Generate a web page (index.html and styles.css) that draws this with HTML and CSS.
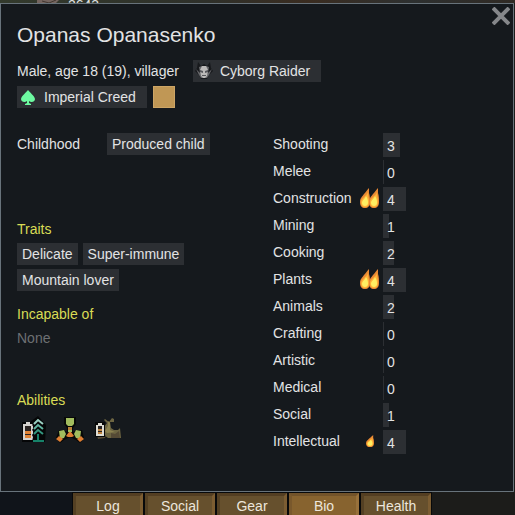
FILE: index.html
```html
<!DOCTYPE html>
<html lang="en">
<head>
    <meta charset="UTF-8">
    <meta name="viewport" content="width=device-width, initial-scale=1.0">
    <title>Opanas Opanasenko</title>
    <link rel="stylesheet" href="styles.css">
</head>
<body>
    <!-- shared flame shape for skill passions -->
    <svg class="defs" aria-hidden="true">
        <symbol id="flame" viewBox="0 0 10 20" preserveAspectRatio="none">
            <path fill="#ea8a34" d="M9 0 L9 5 C10 8 10 11 10 14 C10 18 8 20 5 20 C2 20 0 18 0 14 C0 10 2 9 4 6 C6 4 7 2 9 0Z"/>
            <path fill="#ffb238" d="M8 4 C8 8 9 10 9 14 C9 17 8 19 5 19 C2 19 1 17 1 14 C1 10 7 8 8 4Z"/>
            <path fill="#ffee62" d="M6 8 C8 11 8 13 8 15 C8 19 2 19 2 15 C2 12 5 11 6 8Z"/>
        </symbol>
    </svg>

    <div class="world">
        <svg class="item" viewBox="0 0 22 3" width="22" height="3" aria-hidden="true"><path fill="#75655f" d="M0 0h22l-3 3H0z"/><path stroke="#40362f" d="M5 1l7 2 7-3" fill="none"/></svg>
        <span class="count">2643</span>
    </div>

    <main class="window">
        <button class="close" type="button" aria-label="Close">
            <svg viewBox="0 0 18 18" width="18" height="18" aria-hidden="true"><path d="M1 1L17 17M17 1L1 17" stroke="#85878a" stroke-width="4"/></svg>
        </button>

        <h1>Opanas Opanasenko</h1>
        <div class="info">
            <div class="info-row">
                <span class="summary">Male, age 18 (19), villager</span>
                <span class="chip with-icon">
                    <svg viewBox="0 0 18 18" width="18" height="18" aria-hidden="true">
                        <path fill="#17191c" d="M3 0L6 4L9 2L12 4L15 0L16 6L18 9L14 13L12 17H6L4 13L0 9L2 6Z"/>
                        <path fill="#66676a" d="M1 7L5 11L4 5L7 4H11L14 5L13 11L17 7L14 13L12 16H6L4 13Z"/>
                        <path fill="#bbb9b8" d="M7 4H11L13 8L12 14L10 16H8L6 14L5 8Z"/>
                        <path fill="#55565a" d="M5 8L8 9V11L5 10ZM13 8L10 9V11L13 10ZM7 13H11V14H7Z"/>
                    </svg>
                    Cyborg Raider
                </span>
            </div>
            <div class="info-row tight">
                <span class="chip with-icon">
                    <svg viewBox="0 0 18 18" width="18" height="18" aria-hidden="true">
                        <path fill="#6dfaa1" d="M9 2C11 5 15 7 16 11C16 14 12 15 10 13L10 15L12 16V17H6V16L8 15L8 13C6 15 2 14 2 11C3 7 7 5 9 2Z"/>
                    </svg>
                    Imperial Creed
                </span>
                <span class="favorite-color" title="Favorite color"></span>
            </div>
        </div>

        <div class="columns">
            <div class="left">
                <div class="backstory">
                    <span>Childhood</span>
                    <span class="chip">Produced child</span>
                </div>

                <section class="traits">
                    <h2>Traits</h2>
                    <div class="chips">
                        <span class="chip">Delicate</span>
                        <span class="chip">Super-immune</span>
                        <span class="chip">Mountain lover</span>
                    </div>
                </section>

                <section class="incapable">
                    <h2>Incapable of</h2>
                    <p class="none">None</p>
                </section>

                <section class="abilities">
                    <h2>Abilities</h2>
                    <div class="ability-list">
                        <button type="button" aria-label="Tree growth">
                            <svg viewBox="0 0 32 32" width="32" height="32" aria-hidden="true">
                                <path fill="#050607" d="M5 7h8l8-6 8 9-1 17H5z"/>
                                <path fill="#d4d2ce" d="M9 7h4v2h3v16H6V9h3z"/>
                                <path fill="#292321" d="M8 11h6v12H8z"/>
                                <path fill="#e08336" d="M8 16h6v3H8zM8 20h6v3H8z"/>
                                <path fill="#050607" d="M21 2l7 8-2 2 2 3-2 2 2 3-2 2 1 5H15l1-5-1-2 2-3-2-2 2-3-2-2z"/>
                                <g fill="none" stroke-width="2">
                                    <path stroke="#9ad0c2" d="M17 9l4-4 5 4"/>
                                    <path stroke="#61b4a0" d="M17 14l4-4 5 4"/>
                                    <path stroke="#34967f" d="M17 19l4-4 5 4"/>
                                    <path stroke="#168269" d="M21 19v6M16 26h11"/>
                                </g>
                            </svg>
                        </button>
                        <button type="button" aria-label="Toxic spray">
                            <svg viewBox="0 0 32 32" width="32" height="32" aria-hidden="true">
                                <path fill="#070807" d="M10 2h12v7l-3 4v4l5-2h4l2 8-4 5-4-3-6-3-6 3-4 3-4-5 3-8h4l4 2v-4l-3-4z"/>
                                <path fill="#a2bc5e" d="M12 3h8v6l-2 2h-4l-2-2zM5 16l5-1 2 4-2 4-4 1zM27 16l-5-1-2 4 2 4 4 1z"/>
                                <path fill="#bb8238" d="M14 12h4v3h-4z"/>
                                <path fill="#a2bc5e" d="M14 15h4v2h-4z"/>
                                <path fill="#df7e32" d="M15 17h2l3 4-2 1h-4l-2-1zM5 21l4 3-3 3-4-3zM27 21l-4 3 3 3 4-3z"/>
                            </svg>
                        </button>
                        <button type="button" aria-label="Wood shaping">
                            <svg viewBox="0 0 32 32" width="32" height="32" aria-hidden="true">
                                <path fill="#6d6542" d="M14 4l4 3 3-4 2 1v3h-4l1 6 3 2h4l2-2 1 10H17l-4-3H7l6-8 3-4-3-3z"/>
                                <path fill="#8b8250" d="M17 6l2 2v7l5 2-8 1-2-2 3-5z"/>
                                <path fill="#554a35" d="M20 18l4 1 4-3 1 7H20zM6 20h9l-1 3-7 1z"/>
                                <path fill="#090a0a" d="M4 7h10v15H4z"/>
                                <path fill="#deddd5" d="M7 8h4v2h2v11H5V10h2z"/>
                                <path fill="#292321" d="M7 11h4v8H7z"/>
                                <path fill="#bd8341" d="M7 14h4v2H7zM7 17h4v2H7z"/>
                            </svg>
                        </button>
                    </div>
                </section>
            </div>

            <ul class="skills"></ul>
        </div>
    </main>

    <nav class="tabs">
        <button type="button">Log</button>
        <button type="button">Social</button>
        <button type="button">Gear</button>
        <button type="button" class="active">Bio</button>
        <button type="button">Health</button>
    </nav>

    <script src="script.js"></script>
</body>
</html>
```
FILE: styles.css
```css
* {
    box-sizing: border-box;
}

body {
    margin: 0;
    height: 100vh;
    display: flex;
    flex-direction: column;
    overflow: hidden;
    background: linear-gradient(to right, #10141a 14%, #1c1c1a 84%);
    color: #e2e3e4;
    font-family: "Liberation Sans", Arial, sans-serif;
    font-size: 14px;
    line-height: 22px;
}

h1, h2, p, ul {
    margin: 0;
    padding: 0;
    font-weight: normal;
}

button {
    margin: 0;
    padding: 0;
    border: none;
    background: none;
    color: inherit;
    font: inherit;
    cursor: pointer;
}

svg {
    display: block;
}

.defs {
    position: absolute;
    width: 0;
    height: 0;
}

/* strip of the map above the window */
.world {
    flex: none;
    display: flex;
    align-items: flex-start;
    gap: 9px;
    height: 3px;
    padding-left: 37px;
    background: linear-gradient(to right, #333a2c, #2e302a 40%, #3a2c20 60%, #2d3030 80%, #302a24);
}

.count {
    line-height: 10px;
}

/* character window */
.window {
    flex: none;
    position: relative;
    margin-right: 1px;
    padding: 17px 16px 37px;
    border: 1px solid #68737b;
    background-color: #15191d;
}

.close {
    position: absolute;
    top: 3px;
    right: 3px;
}

h1 {
    font-size: 21px;
    line-height: 28px;
}

.info {
    display: flex;
    flex-direction: column;
    gap: 4px;
    margin-top: 11px;
}

.info-row {
    display: flex;
    gap: 14px;
}

.info-row.tight {
    gap: 6px;
}

.chip {
    padding: 0 5px;
    background-color: #2c2f33;
}

.with-icon {
    display: flex;
    align-items: center;
    gap: 7px;
    padding: 0 11px 0 2px;
}

.favorite-color {
    width: 22px;
    height: 22px;
    border: 1px solid #cda565;
    background-color: #c09755;
}

.columns {
    display: grid;
    grid-template-columns: 256px 1fr;
    margin-top: 25px;
}

.backstory {
    display: grid;
    grid-template-columns: 90px max-content;
}

h2 {
    color: #d9dc55;
    font-size: 14px;
}

.traits {
    margin-top: 63px;
}

.chips {
    display: flex;
    flex-wrap: wrap;
    gap: 4px 5px;
    max-width: 220px;
    margin-top: 3px;
}

.incapable {
    margin-top: 12px;
}

.none {
    margin-top: 2px;
    color: #6d7073;
}

.abilities {
    margin-top: 40px;
}

.ability-list {
    display: flex;
    gap: 5px;
    margin-top: 4px;
}

/* skills */
.skills {
    display: flex;
    flex-direction: column;
    gap: 3px;
    list-style: none;
}

.skill {
    display: grid;
    grid-template-columns: 84px 26px 1fr;
}

.passion {
    display: flex;
    align-items: center;
    justify-content: center;
    height: 22px;
}

.level {
    height: 24px;
    background-color: #2c2f33;
    line-height: 26px;
    text-indent: 4px;
    white-space: nowrap;
}

/* inspector tabs */
.tabs {
    flex: none;
    display: flex;
    gap: 2px;
    margin-top: 1px;
    padding-left: 73px;
}

.tabs button {
    width: 70px;
    height: 26px;
    border: 3px solid;
    border-color: #533e22 #7c5d32 #4a371e #544023;
    outline: 1px solid #08090a;
    background-color: #66502d;
    color: #ece6dc;
    line-height: 18px;
}

.tabs .active {
    border-color: #72532a #98713b #67491f #79582c;
    background-color: #87632f;
}
```
FILE: script.js
```js
const skills = [
    { name: 'Shooting', level: 3 },
    { name: 'Melee', level: 0 },
    { name: 'Construction', level: 4, passion: 'major' },
    { name: 'Mining', level: 1 },
    { name: 'Cooking', level: 2 },
    { name: 'Plants', level: 4, passion: 'major' },
    { name: 'Animals', level: 2 },
    { name: 'Crafting', level: 0 },
    { name: 'Artistic', level: 0 },
    { name: 'Medical', level: 0 },
    { name: 'Social', level: 1 },
    { name: 'Intellectual', level: 4, passion: 'minor' }
];

const flames = {
    major: '<svg width="20" height="20"><use href="#flame" width="10" height="20"/><use href="#flame" x="9" width="10" height="20"/></svg>',
    minor: '<svg width="8" height="12"><use href="#flame" width="8" height="12"/></svg>'
};

const list = document.querySelector('.skills');

skills.forEach(skill => {
    const width = Math.max(1, Math.round(skill.level * 5.7));
    const row = document.createElement('li');
    row.className = 'skill';
    row.innerHTML = `
        <span>${skill.name}</span>
        <span class="passion">${flames[skill.passion] || ''}</span>
        <span class="level" style="width: ${width}px">${skill.level}</span>`;
    list.appendChild(row);
});
```
